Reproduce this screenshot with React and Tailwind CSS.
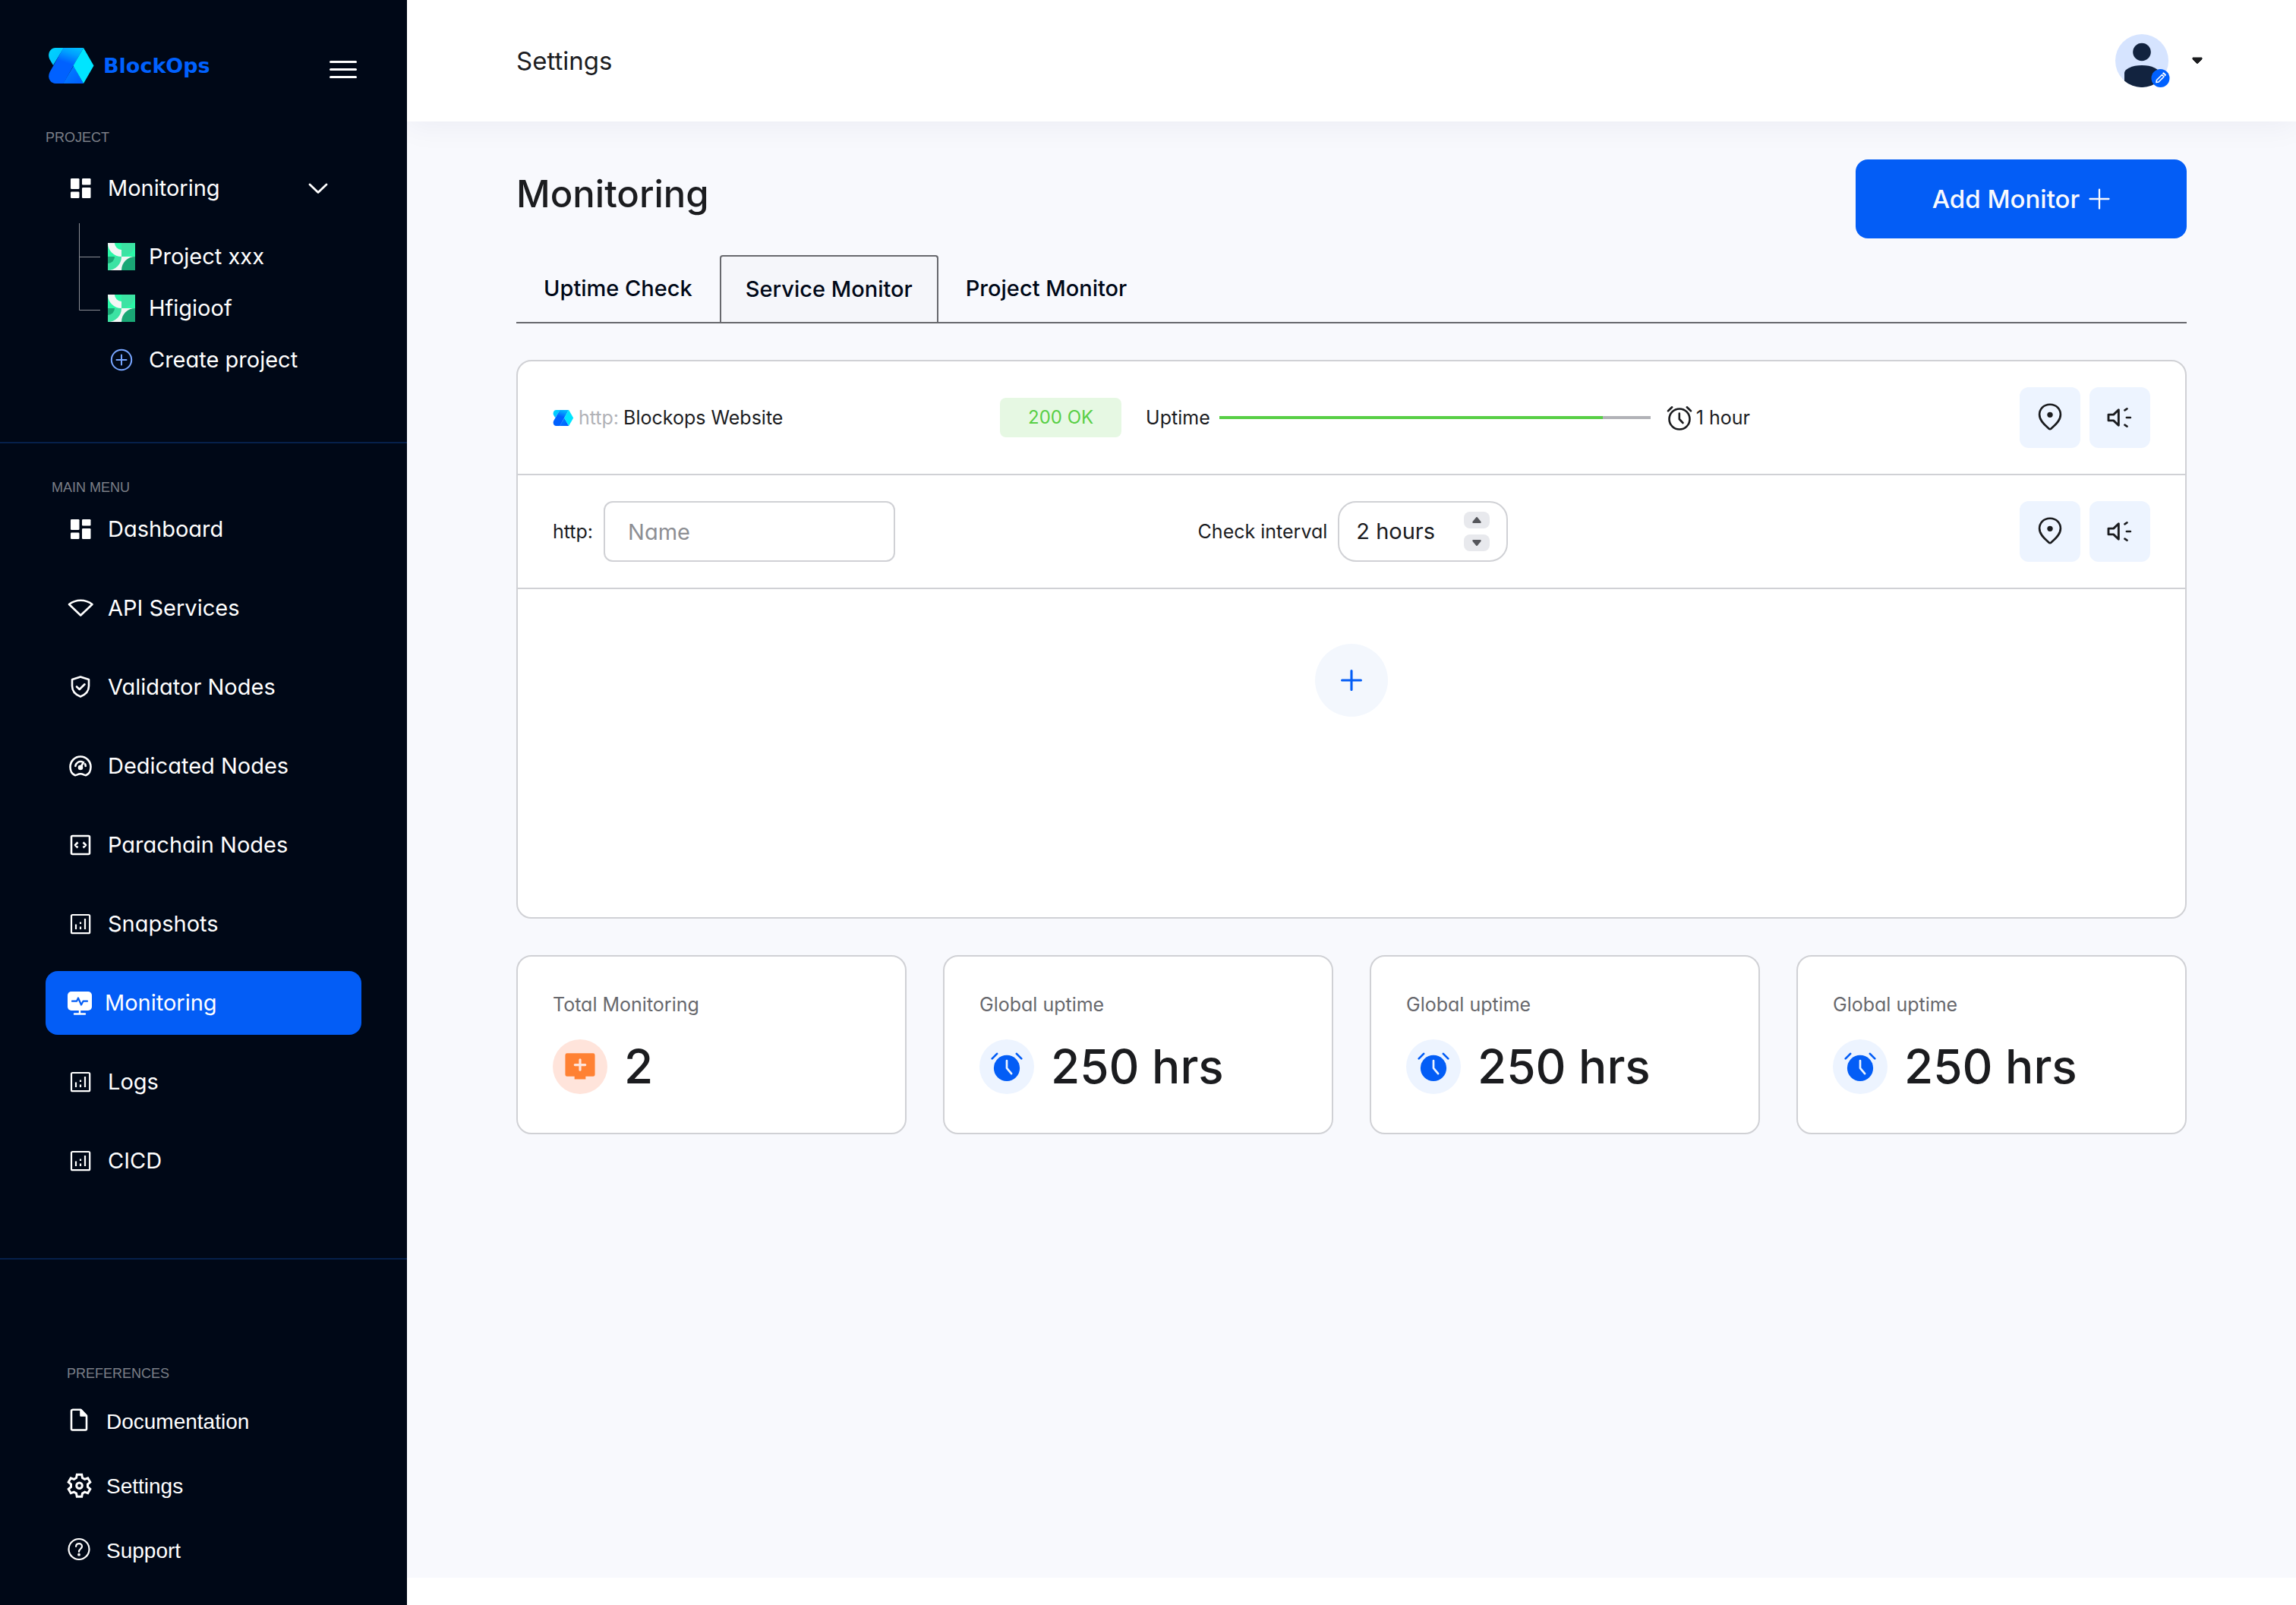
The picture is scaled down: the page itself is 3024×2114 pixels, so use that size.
import React, { useId, useState } from "react";

/* ---------- Brand ---------- */

function LogoMark({ className }) {
  const id = useId();
  return (
    <svg viewBox="0 0 60 47" className={className} aria-hidden="true">
      <defs>
        <linearGradient id={id + "a"} gradientUnits="userSpaceOnUse" x1="36" y1="0" x2="28" y2="24">
          <stop offset="0" stopColor="#00BBFF" />
          <stop offset="0.35" stopColor="#00A0FF" />
          <stop offset="0.9" stopColor="#0061FF" />
        </linearGradient>
        <linearGradient id={id + "b"} x1="0" y1="0" x2="1" y2="1">
          <stop offset="0" stopColor="#00D5FF" />
          <stop offset="1" stopColor="#00BDFF" />
        </linearGradient>
        <linearGradient id={id + "c"} x1="0" y1="0" x2="1" y2="1">
          <stop offset="0" stopColor="#0085FF" />
          <stop offset="1" stopColor="#005CFF" />
        </linearGradient>
      </defs>
      <path d="M9 0H20L6 23L1.300 15C-2 8 2 0 9 0Z" fill={`url(#${id}b)`} />
      <path d="M33 23.500L46 47H19Z" fill={`url(#${id}c)`} />
      <path d="M19.500 0H46L19.500 47H9C2 47-2 39 1.500 32Z" fill={`url(#${id}a)`} />
      <path d="M46 0L59.500 23.500L46 47L32.500 23.500Z" fill="#00E5FF" />
    </svg>
  );
}

function ProjectMark() {
  return (
    <svg viewBox="0 0 36 36" className="size-9 shrink-0" aria-hidden="true">
      <rect width="36" height="18" fill="#2BF7A7" />
      <rect y="18" width="36" height="18" fill="#F3F6F5" />
      <path d="M0 0A18 18 0 0 0 18 18V9A9 9 0 0 1 9 0Z" fill="#F3F6F5" />
      <path d="M18 0H36A18 18 0 0 1 18 18Z" fill="#3CE3A3" />
      <path d="M0 18H18A18 18 0 0 1 0 36Z" fill="#3CE3A3" />
      <path d="M0 18H9A9 9 0 0 1 0 27Z" fill="#1AA775" />
      <path d="M36 18V36H18A18 18 0 0 1 36 18Z" fill="#1AA775" />
    </svg>
  );
}

/* ---------- Icons (36 x 36 grid) ---------- */

function Icon({ children, className = "size-9", stroke = 2.6 }) {
  return (
    <svg
      viewBox="0 0 36 36"
      className={"shrink-0 " + className}
      fill="none"
      stroke="currentColor"
      strokeWidth={stroke}
      strokeLinecap="round"
      strokeLinejoin="round"
      aria-hidden="true"
    >
      {children}
    </svg>
  );
}

const DashboardIcon = () => (
  <Icon>
    <g fill="currentColor" stroke="none">
      <rect x="5" y="5" width="11.500" height="14" rx="1.200" />
      <rect x="20" y="5" width="11.500" height="8.500" rx="1.200" />
      <rect x="5" y="22.500" width="11.500" height="8.500" rx="1.200" />
      <rect x="20" y="17" width="11.500" height="14" rx="1.200" />
    </g>
  </Icon>
);
const ApiIcon = () => (
  <Icon>
    <path d="M3 13C12 6 24.500 6 33.500 13L18.200 27.500Z" />
  </Icon>
);
const ShieldIcon = () => (
  <Icon>
    <path d="M18 4.500L29 8.100V16.500C29 23.500 24.500 28 18 30.500C11.500 28 7 23.500 7 16.500V8.100Z" />
    <path d="M13 17.500L16.700 21L23.500 14.300" />
  </Icon>
);
const GaugeIcon = () => (
  <Icon>
    <path d="M10.500 30C6 28 4.500 23.500 4.500 19A13.500 13.500 0 0 1 31.500 19C31.500 23.500 30 28 25.500 30C23 30.700 22 28.300 18 28.300S13 30.700 10.500 30Z" />
    <path d="M11.300 18A7 7 0 0 1 20 12.300M24.700 18C24.700 17 24.500 16 24 15.300" />
    <path d="M18 20L22 13" />
    <circle cx="18" cy="20" r="2" fill="currentColor" />
  </Icon>
);
const CodeIcon = () => (
  <Icon>
    <rect x="6" y="6" width="24" height="24" rx="1.500" />
    <path d="M14.500 14.500L11 18L14.500 21.500M21.500 14.500L25 18L21.500 21.500" strokeLinecap="butt" />
  </Icon>
);
const ChartIcon = () => (
  <Icon stroke={2.2}>
    <rect x="6" y="6" width="24.200" height="24.200" rx="1.500" />
    <path d="M12 18.500V25M18 21.500V25M18 15.500V18M24 11V25" strokeLinecap="butt" />
  </Icon>
);
const MonitorIcon = () => (
  <Icon>
    <rect x="1" y="3" width="32" height="25" rx="5" fill="currentColor" stroke="none" />
    <path d="M17 28V32M10 32.500H24" stroke="currentColor" strokeWidth="2.400" />
    <path d="M7 15.700H13L15 11.500L19 20.500L21.500 15.700H27" stroke="#035DF6" strokeWidth="2.200" />
  </Icon>
);
const DocIcon = () => (
  <Icon>
    <path d="M8 1.800H18.500L26 9.800V27A1.500 1.500 0 0 1 24.500 28.500H7.500A1.500 1.500 0 0 1 6 27V3.500Q6 1.800 8 1.800Z" />
    <path d="M18.500 2.500V9.500H25.500Z" fill="currentColor" />
  </Icon>
);
const GearIcon = () => (
  <Icon stroke={3}>
    <path
      strokeLinejoin="miter"
      d="M13.300 2.200H19.700L20.500 6.500L23.600 8.300L27.700 6.800L30.800 12.200L27.500 15L27.500 18.500L30.800 21.300L27.700 26.700L23.600 25.200L20.500 27L19.700 31.300H13.300L12.500 27L9.400 25.200L5.300 26.700L2.200 21.300L5.500 18.500L5.500 15L2.200 12.200L5.300 6.800L9.400 8.300L12.500 6.500Z"
    />
    <circle cx="16.500" cy="16.700" r="3.800" />
  </Icon>
);
const HelpIcon = () => (
  <Icon stroke={2.2}>
    <circle cx="16" cy="15.500" r="13.500" />
    <path d="M12.100 12C12.100 6.800 20 6.800 20 11.800C20 15 16 15 16 18.800" />
    <circle cx="16" cy="22.700" r="0.800" fill="currentColor" />
  </Icon>
);
const PinIcon = () => (
  <Icon className="size-10" stroke={2.4}>
    <path d="M18 2.500C10 2.500 5.500 8.500 5.500 14.500C5.500 22 12.500 27.500 16.500 31Q18 32.300 19.500 31C23.500 27.500 30.500 22 30.500 14.500C30.500 8.500 26 2.500 18 2.500Z" />
    <circle cx="18" cy="14.700" r="3.300" fill="currentColor" stroke="none" />
  </Icon>
);
const HornIcon = () => (
  <Icon className="size-10" stroke={2.6}>
    <path d="M4.500 14.500H10.500L16.500 8.800V27.200L10.500 21.500H4.500Z" />
    <path d="M23.800 9.300L26.500 7.500M26 18H30.500M23.800 26.700L26.500 28.500" strokeWidth="2.400" />
  </Icon>
);
const ClockIcon = () => (
  <Icon>
    <circle cx="18" cy="20" r="13.500" />
    <path d="M17.800 12.500V20L22.500 25M3 9.300L8.200 4.300M33 9.300L27.800 4.300" />
  </Icon>
);
const ClockSolidIcon = () => (
  <Icon className="size-11" stroke={2.2}>
    <circle cx="18" cy="19.500" r="14" fill="currentColor" stroke="none" />
    <path d="M18 11.500V19.500L23 25.500" stroke="#EDF4FF" />
    <path d="M2.200 9.300L7.500 4M33.800 9.300L28.500 4" />
  </Icon>
);
const ScreenPlusIcon = () => (
  <Icon className="size-11">
    <path
      d="M4 3.500H32A2 2 0 0 1 34 5.500V26.500A2 2 0 0 1 32 28.500H24V31.500H12V28.500H4A2 2 0 0 1 2 26.500V5.500A2 2 0 0 1 4 3.500Z"
      fill="currentColor"
      stroke="none"
    />
    <path d="M18 10.500V21.500M12.500 16H23.500" stroke="#FFE4DB" />
  </Icon>
);
const PlusIcon = ({ className, stroke }) => (
  <Icon className={className} stroke={stroke}>
    <path d="M18 2V34M2 18H34" />
  </Icon>
);

/* ---------- Sidebar ---------- */

const menu = [
  { label: "Dashboard", icon: DashboardIcon },
  { label: "API Services", icon: ApiIcon },
  { label: "Validator Nodes", icon: ShieldIcon },
  { label: "Dedicated Nodes", icon: GaugeIcon },
  { label: "Parachain Nodes", icon: CodeIcon },
  { label: "Snapshots", icon: ChartIcon },
  { label: "Monitoring", icon: MonitorIcon, active: true },
  { label: "Logs", icon: ChartIcon },
  { label: "CICD", icon: ChartIcon },
];

const preferences = [
  { label: "Documentation", icon: DocIcon },
  { label: "Settings", icon: GearIcon },
  { label: "Support", icon: HelpIcon },
];

function SectionLabel({ children, className = "" }) {
  return (
    <h2 className={"font-['Liberation_Sans',sans-serif] text-[18px] leading-[26px] text-[#7B7F87] " + className}>
      {children}
    </h2>
  );
}

function Sidebar() {
  return (
    <aside className="relative z-20 w-[536px] shrink-0 bg-[#000817] text-[29px] leading-9 text-white">
      <div className="border-b-2 border-[#06204B] pb-[90px]">
        <div className="flex items-start justify-between pt-[63px] pr-[66px] pl-16">
          <a href="#home" className="flex h-[47px] items-center gap-3">
            <LogoMark className="h-[47px] w-[60px]" />
            <span className="font-['DejaVu_Sans',sans-serif] text-[27px] leading-[47px] font-bold text-[#0061FF]">BlockOps</span>
          </a>
          <button type="button" aria-label="Toggle menu" className="mt-[17px] flex w-9 flex-col gap-[7px]">
            <span className="h-[3px] rounded-full bg-white" />
            <span className="h-[3px] rounded-full bg-white" />
            <span className="h-[3px] rounded-full bg-white" />
          </button>
        </div>
        <SectionLabel className="mt-[58px] ml-[60px]">PROJECT</SectionLabel>
        <button type="button" aria-expanded="true" className="mt-9 flex w-full items-center gap-[18px] pr-[103px] pl-[88px]">
          <DashboardIcon />
          <span>Monitoring</span>
          <svg viewBox="0 0 28 28" className="ml-auto size-7" fill="none" stroke="currentColor" strokeWidth="2.800" strokeLinecap="round" strokeLinejoin="round" aria-hidden="true">
            <path d="M3 9L14 19.500L25 9" />
          </svg>
        </button>
        <div className="mt-7 flex pl-[104px]">
          <svg viewBox="0 0 28 116" className="h-[116px] w-7 shrink-0" fill="none" stroke="#8A8D94" strokeWidth="1" aria-hidden="true">
            <path d="M0.500 0V114.500H28M0.500 44.500H28" />
          </svg>
          <ul className="ml-[10px] flex flex-col gap-8 pt-[26px]">
            {["Project xxx", "Hfigioof"].map((name) => (
              <li key={name}>
                <a href="#project" className="flex items-center gap-[18px]">
                  <ProjectMark />
                  {name}
                </a>
              </li>
            ))}
            <li>
              <button type="button" className="flex items-center gap-[18px]">
                <span className="text-[#77A5FF]">
                  <Icon>
                    <circle cx="18" cy="18" r="13.200" strokeWidth="2" />
                    <path d="M18 11.500V24.500M11.500 18H24.500" strokeWidth="2" />
                  </Icon>
                </span>
                Create project
              </button>
            </li>
          </ul>
        </div>
      </div>

      <nav aria-label="Main menu" className="border-b-2 border-[#06204B] px-[60px] pt-[45px] pb-[86px]">
        <SectionLabel className="ml-2">MAIN MENU</SectionLabel>
        <ul className="flex flex-col gap-5">
          {menu.map(({ label, icon: I, active }) => (
            <li key={label}>
              <a
                href="#menu"
                aria-current={active ? "page" : undefined}
                className={
                  active
                    ? "flex h-[84px] items-center gap-[14px] rounded-2xl bg-[#035DF6] pl-7"
                    : "flex h-[84px] items-center gap-[18px] pl-7"
                }
              >
                <I />
                {label}
              </a>
            </li>
          ))}
        </ul>
      </nav>

      <nav aria-label="Preferences" className="pt-[137px] pl-[88px] font-['Liberation_Sans',sans-serif] text-[28px]">
        <SectionLabel>PREFERENCES</SectionLabel>
        <ul className="mt-2">
          {preferences.map(({ label, icon: I }) => (
            <li key={label}>
              <a href="#preferences" className="flex h-[85px] items-center gap-4">
                <I />
                {label}
              </a>
            </li>
          ))}
        </ul>
      </nav>
    </aside>
  );
}

/* ---------- Header ---------- */

function Header() {
  return (
    <header className="relative z-10 flex h-40 items-center justify-between bg-white pr-[122px] pl-36 shadow-[0_4px_40px_rgba(0,20,80,0.06)]">
      <p className="text-[33px] leading-10">Settings</p>
      <button type="button" aria-label="Account" className="flex items-center gap-7">
        <svg viewBox="0 0 72 70" className="h-[70px] w-[72px]" aria-hidden="true">
          <circle cx="35" cy="35" r="35" fill="#D6E4FF" />
          <circle cx="35" cy="23.500" r="11.800" fill="#12233F" />
          <path d="M12 51C12 46 22 41 35 41S58 46 58 51V61.400A35 35 0 0 1 12 61.400Z" fill="#12233F" />
          <circle cx="59.500" cy="58" r="12" fill="#0061FF" />
          <path d="M54.500 60.500L61.500 53.500L64 56L57 63L54 63.500Z" fill="none" stroke="#fff" strokeWidth="1.600" strokeLinejoin="round" />
          <path d="M62.500 52.300L63.700 51.300L66 53.700L65 54.800" fill="none" stroke="#fff" strokeWidth="1.800" strokeLinejoin="round" />
        </svg>
        <svg viewBox="0 0 16 10" className="h-2.5 w-4" aria-hidden="true">
          <path d="M2 1H14V3L8.500 8.500H7.500L2 3Z" fill="#1B1C1F" stroke="#1B1C1F" strokeLinejoin="round" />
        </svg>
      </button>
    </header>
  );
}

/* ---------- Monitors ---------- */

const tabs = ["Uptime Check", "Service Monitor", "Project Monitor"];

function RowActions() {
  return (
    <div className="ml-auto flex gap-3">
      <button type="button" aria-label="Location" className="flex size-20 items-center justify-center rounded-xl bg-[#EDF4FF]">
        <PinIcon />
      </button>
      <button type="button" aria-label="Announce" className="flex size-20 items-center justify-center rounded-xl bg-[#EDF4FF]">
        <HornIcon />
      </button>
    </div>
  );
}

function IntervalStepper() {
  const [hours, setHours] = useState(2);
  const step = "flex h-[22px] w-[34px] items-center justify-center rounded-lg bg-[#E8E9ED]";
  return (
    <div className="flex h-20 w-56 items-center justify-between rounded-3xl border-2 border-[#D0D1D5] pr-[22px] pl-[22px]">
      <input
        id="interval"
        type="text"
        readOnly
        value={hours + " hours"}
        className="w-32 bg-transparent text-[29px] leading-9 outline-none"
      />
      <div className="flex flex-col gap-2">
        <button type="button" aria-label="Increase" className={step} onClick={() => setHours(hours + 1)}>
          <svg viewBox="0 0 14 10" className="h-2.5 w-3.5" aria-hidden="true">
            <path d="M6.500 1H7.500L12.500 7V9H1.500V7Z" fill="#55565B" />
          </svg>
        </button>
        <button type="button" aria-label="Decrease" className={step} onClick={() => setHours(Math.max(1, hours - 1))}>
          <svg viewBox="0 0 14 10" className="h-2.5 w-3.5" aria-hidden="true">
            <path d="M6.500 9H7.500L12.500 3V1H1.500V3Z" fill="#55565B" />
          </svg>
        </button>
      </div>
    </div>
  );
}

function MonitorPanel() {
  const row = "flex h-[150px] items-center border-b-2 border-[#D0D1D5] px-[46px]";
  return (
    <section aria-label="Service monitors" className="mt-12 min-h-[736px] rounded-[20px] border-2 border-[#D0D1D5] bg-white text-[25px] leading-9">
      <div className={row}>
        <div className="flex w-[28%] items-center gap-1.5">
          <LogoMark className="h-[21px] w-7" />
          <span className="text-[#B1B2B7]">http:</span>
          <span>Blockops Website</span>
        </div>
        <span className="flex h-[52px] w-40 items-center justify-center rounded-lg bg-[#E6F8E3] text-[24px] text-[#58CF46]">200 OK</span>
        <span className="ml-8">Uptime</span>
        <div className="ml-3 h-1 w-[27%] bg-[#B1B2B7]" role="img" aria-label="Uptime 89%">
          <div className="h-full w-[89%] bg-[#58CF46]" />
        </div>
        <span className="ml-5 flex items-center gap-1">
          <ClockIcon />1 hour
        </span>
        <RowActions />
      </div>
      <div className={row + " gap-2"}>
        <div className="flex w-2/5 items-center gap-[14px]">
          <label htmlFor="monitor-name">http:</label>
          <input
            id="monitor-name"
            type="text"
            placeholder="Name"
            className="h-20 w-96 rounded-xl border-2 border-[#D0D1D5] px-[30px] text-[29px] leading-9 outline-none placeholder:text-[#8D8E93]"
          />
        </div>
        <div className="flex items-center gap-[14px]">
          <label htmlFor="interval">Check interval</label>
          <IntervalStepper />
        </div>
        <RowActions />
      </div>
      <button type="button" aria-label="Add service monitor" className="mx-auto mt-[72px] flex size-24 items-center justify-center rounded-full bg-[#F3F7FD] text-[#035DF6]">
        <PlusIcon className="size-7" stroke={4} />
      </button>
    </section>
  );
}

const stats = [
  { label: "Total Monitoring", value: "2", icon: ScreenPlusIcon, tone: "bg-[#FFE4DB] text-[#FF8133]" },
  { label: "Global uptime", value: "250 hrs", icon: ClockSolidIcon, tone: "bg-[#EDF4FF] text-[#035DF6]" },
  { label: "Global uptime", value: "250 hrs", icon: ClockSolidIcon, tone: "bg-[#EDF4FF] text-[#035DF6]" },
  { label: "Global uptime", value: "250 hrs", icon: ClockSolidIcon, tone: "bg-[#EDF4FF] text-[#035DF6]" },
];

function StatCard({ label, value, icon: I, tone }) {
  return (
    <div className="rounded-[20px] border-2 border-[#D0D1D5] bg-white px-[46px] pt-[45px] pb-[51px]">
      <p className="text-[25px] leading-9 text-[#67686D]">{label}</p>
      <div className="mt-7 flex items-center gap-[22px]">
        <span className={"flex size-[72px] items-center justify-center rounded-full " + tone}>
          <I />
        </span>
        <span className="text-[62px] leading-[72px] font-medium">{value}</span>
      </div>
    </div>
  );
}

export default function App() {
  return (
    <div className="flex min-h-screen bg-white font-['Inter',sans-serif] text-[#1B1C1F] [font-feature-settings:'cv11']">
      <Sidebar />
      <div className="flex min-w-0 flex-1 flex-col">
        <Header />
        <main className="mb-9 flex-1 bg-[#F8F9FD] px-36 pt-[50px]">
          <div className="flex items-start justify-between">
            <h1 className="text-[49px] leading-[92px] font-medium">Monitoring</h1>
            <button type="button" className="flex h-[104px] w-[436px] items-center justify-center gap-3 rounded-2xl bg-[#035DF6] text-[33px] leading-10 font-medium text-[#F8F9FD]">
              Add Monitor
              <PlusIcon className="size-7" stroke={3} />
            </button>
          </div>
          <div role="tablist" className="mt-[22px] flex border-b-2 border-[#67686D]">
            {tabs.map((t, i) => (
              <button
                key={t}
                type="button"
                role="tab"
                aria-selected={i === 1}
                className={
                  i === 1
                    ? "h-[88px] rounded-t-[4px] border-2 border-b-0 border-[#67686D] bg-[#F5F6FA] px-[32px] text-[29px] leading-9 font-medium text-[#000817]"
                    : "h-[88px] px-9 text-[29px] leading-9 font-medium text-[#000817]"
                }
              >
                {t}
              </button>
            ))}
          </div>
          <MonitorPanel />
          <div className="mt-12 grid grid-cols-4 gap-12">
            {stats.map((s, i) => (
              <StatCard key={i} {...s} />
            ))}
          </div>
        </main>
      </div>
    </div>
  );
}
